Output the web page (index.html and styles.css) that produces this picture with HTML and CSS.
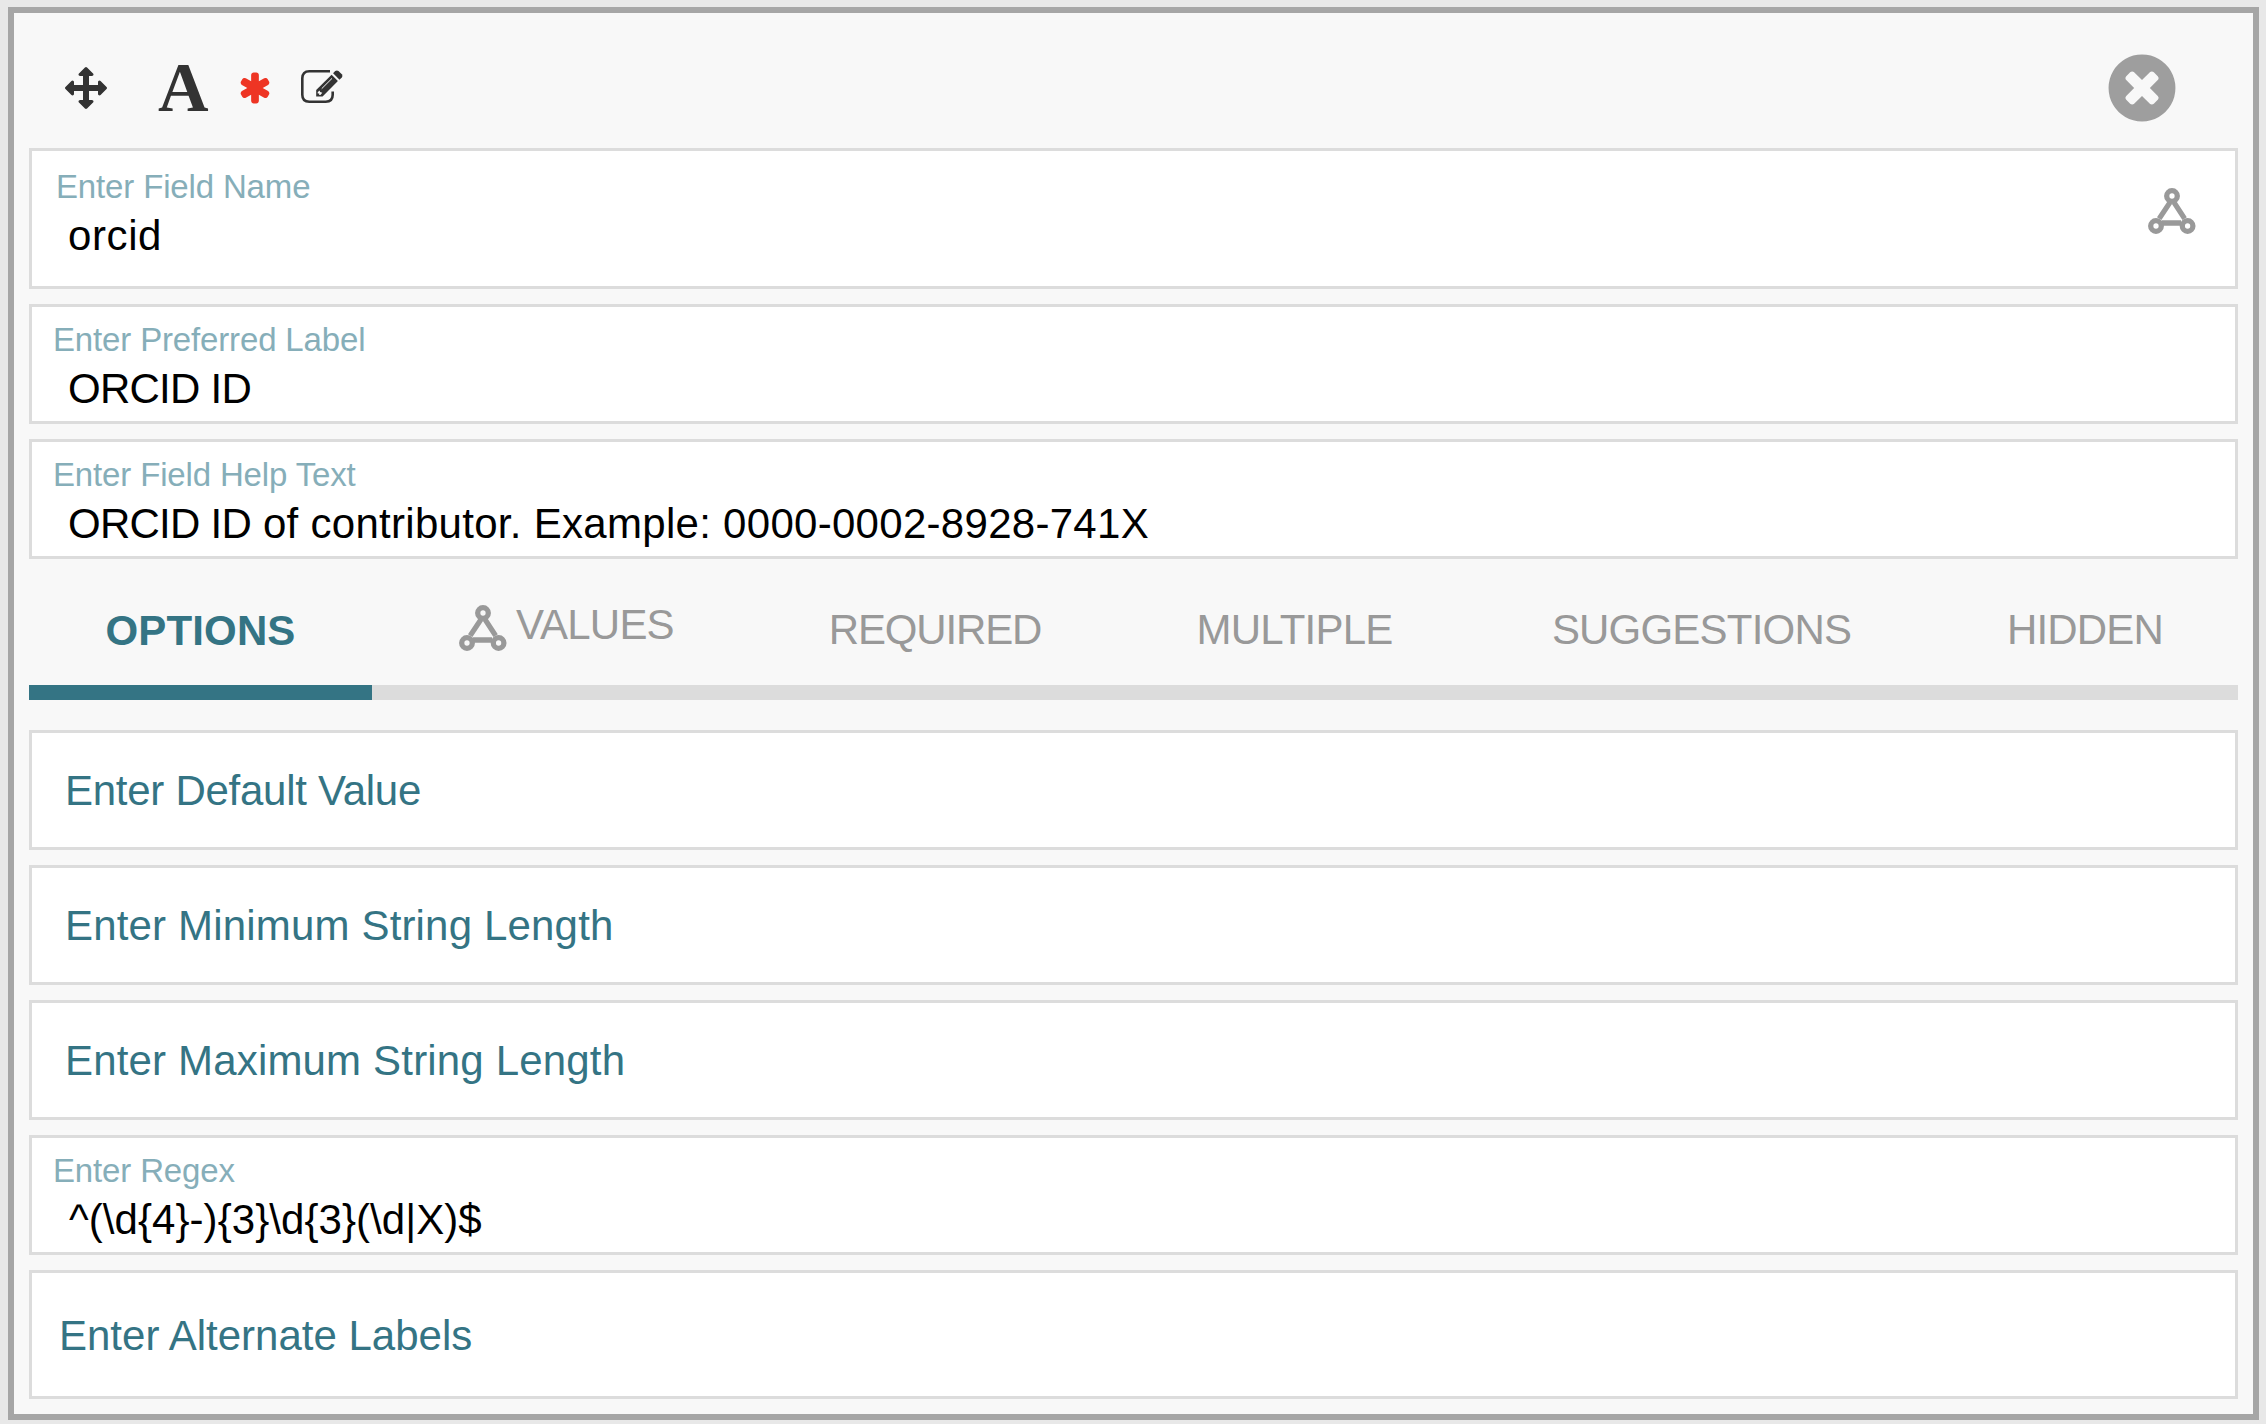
FILE: index.html
```html
<!DOCTYPE html>
<html lang="en">
<head>
<meta charset="utf-8">
<title>Field editor</title>
<link rel="stylesheet" href="styles.css">
</head>
<body>
<svg class="defs" width="0" height="0" aria-hidden="true">
  <symbol id="graph" viewBox="0 0 48 46">
    <g fill="none" stroke="currentColor" stroke-width="5.3">
      <path d="M22 14.4 11.2 30.6M26 14.4 36.6 30.6M14 35H33"/>
      <circle cx="24" cy="8" r="5.3"/><circle cx="8" cy="38" r="5.3"/><circle cx="39.6" cy="38" r="5.3"/>
    </g>
  </symbol>
</svg>
<main class="panel">
  <header class="toolbar">
    <svg class="move" viewBox="0 0 1792 1792"><path d="M1792 896q0 26-19 45l-256 256q-19 19-45 19t-45-19-19-45v-128h-384v384h128q26 0 45 19t19 45-19 45l-256 256q-19 19-45 19t-45-19l-256-256q-19-19-19-45t19-45 45-19h128v-384h-384v128q0 26-19 45t-45 19-45-19l-256-256q-19-19-19-45t19-45l256-256q19-19 45-19t45 19 19 45v128h384v-384h-128q-26 0-45-19t-19-45 19-45l256-256q19-19 45-19t45 19l256 256q19 19 19 45t-19 45-45 19h-128v384h384v-128q0-26 19-45t45-19 45 19l256 256q19 19 19 45z"/></svg>
    <span class="type">A</span>
    <svg class="star" viewBox="0 0 1792 1792"><path d="M1546 1050q46 26 59.500 77.500t-12.500 97.500l-64 110q-26 46-77.500 59.500t-97.500-12.500l-266-153v307q0 52-38 90t-90 38h-128q-52 0-90-38t-38-90v-307l-266 153q-46 26-97.500 12.500t-77.500-59.500l-64-110q-26-46-12.500-97.500t59.500-77.500l266-154-266-154q-46-26-59.500-77.500t12.500-97.500l64-110q26-46 77.500-59.500t97.500 12.500l266 153v-307q0-52 38-90t90-38h128q52 0 90 38t38 90v307l266-153q46-26 97.500-12.500t77.500 59.500l64 110q26 46 12.500 97.500t-59.500 77.500l-266 154z"/></svg>
    <svg class="edit" viewBox="0 0 42 33">
      <path class="frame" d="M29 1.300H8.300Q1.300 1.300 1.300 8.300V24.700Q1.300 31.700 8.300 31.700H24.700Q31.700 31.700 31.700 24.700V21.500"/>
      <path d="M30.600 4.800 36.900 11 21.600 26.500H15.200V19.900Z"/>
      <path d="M32.100 3.200 34.200 1.100Q35.900-.2 37.500 1.100L40.800 4.300Q42.200 6 40.800 7.500L38.500 9.700Z"/>
      <path class="cut" d="M16.700 22.200 18.500 20.400 19.200 22.100 21.300 22.700 19.400 24.900H18.200V23.600H16.700Z"/>
      <path class="shine" d="M20.700 18.700 31 8.400"/>
    </svg>
    <svg class="close" viewBox="0 0 1792 1792"><path d="M1277 1122q0-26-19-45l-181-181 181-181q19-19 19-45 0-27-19-46l-90-90q-19-19-46-19-26 0-45 19l-181 181-181-181q-19-19-45-19-27 0-46 19l-90 90q-19 19-19 46 0 26 19 45l181 181-181 181q-19 19-19 45 0 27 19 46l90 90q19 19 46 19 26 0 45-19l181-181 181 181q19 19 45 19 27 0 46-19l90-90q19-19 19-46zm387-226q0 209-103 385.500t-279.500 279.500-385.500 103-385.500-103-279.500-279.500-103-385.500 103-385.500 279.500-279.500 385.500-103 385.500 103 279.500 279.500 103 385.500z"/></svg>
  </header>

  <section class="fields">
    <div class="field name">
      <div><div class="label">Enter Field Name</div><div class="value">orcid</div></div>
      <svg class="graph"><use href="#graph"/></svg>
    </div>
    <div class="field"><div><div class="label">Enter Preferred Label</div><div class="value"><span class="caps">ORCID ID</span></div></div></div>
    <div class="field"><div><div class="label">Enter Field Help Text</div><div class="value help"><span class="caps">ORCID ID</span> of contributor. Example: 0000-0002-8928-741X</div></div></div>
  </section>

  <nav class="tabs">
    <div class="tab active"><span>OPTIONS</span></div>
    <div class="tab values"><svg class="graph"><use href="#graph"/></svg><span>VALUES</span></div>
    <div class="tab required"><span>REQUIRED</span></div>
    <div class="tab multiple"><span>MULTIPLE</span></div>
    <div class="tab suggestions"><span>SUGGESTIONS</span></div>
    <div class="tab hidden"><span>HIDDEN</span></div>
  </nav>

  <section class="fields">
    <div class="field"><div class="placeholder default">Enter Default Value</div></div>
    <div class="field"><div class="placeholder length">Enter Minimum String Length</div></div>
    <div class="field"><div class="placeholder length">Enter Maximum String Length</div></div>
    <div class="field"><div><div class="label">Enter Regex</div><div class="value regex">^(\d{4}-){3}\d{3}(\d|X)$</div></div></div>
    <div class="field alternate"><div class="placeholder">Enter Alternate Labels</div></div>
  </section>
</main>
</body>
</html>
```
FILE: styles.css
```css
* { box-sizing: border-box; }
body {
  margin: 0;
  width: 2266px;
  height: 1424px;
  padding: 7px 7px 4px 8px;
  background: #e8e8e8;
  font-family: "Liberation Sans", Arial, Helvetica, sans-serif;
  font-size: 42px;
  overflow: hidden;
}
.defs { display: none; }
svg { display: block; flex: none; overflow: visible; }
.panel {
  height: 1413px;
  border: 6px solid #a6a6a6;
  background: #f8f8f8;
  padding: 0 15px;
}
.toolbar {
  display: flex;
  align-items: center;
  height: 135px;
  padding: 15px 57px 0 36px;
  color: #333;
  fill: #333;
}
.move { width: 42px; height: 42px; }
.type {
  margin-left: 51px;
  width: 51px;
  font: bold 70px/80px "Liberation Serif", "Times New Roman", serif;
}
.star { width: 36px; height: 36px; margin-left: 28px; fill: #ee3524; }
.edit { width: 42px; height: 33px; margin-left: 28px; margin-top: -3px; }
.frame { fill: none; stroke: #333; stroke-width: 2.6; }
.cut { fill: #f8f8f8; }
.shine { fill: none; stroke: #f8f8f8; stroke-width: 1; }
.close { width: 78px; height: 78px; margin-left: auto; fill: #9e9e9e; }

.fields { display: flex; flex-direction: column; gap: 15px; }
.field {
  display: flex;
  justify-content: space-between;
  height: 120px;
  border: 3px solid #dcdcdc;
  background: #fff;
  padding: 15px 21px 0;
  white-space: pre;
}
.field.name { height: 141px; padding: 18px 39px 0 24px; }
.label { font-size: 33px; line-height: 36px; letter-spacing: -0.15px; color: #86aeb9; }
.value { margin: 7px 0 0 15px; line-height: 48px; color: #000; }
.name .value { margin-left: 12px; letter-spacing: 0.6px; }
.help { letter-spacing: 0.29px; }
.caps { letter-spacing: -0.75px; }
.value.regex { margin-left: 16px; letter-spacing: 0.06px; }
.graph { width: 48px; height: 46px; color: #999; }
.name .graph { margin-top: 19px; }
.placeholder { padding: 19px 0 0 12px; line-height: 48px; color: #347484; }
.default { letter-spacing: -0.27px; }
.length { letter-spacing: 0.17px; }
.alternate { height: 129px; }
.alternate .placeholder { padding: 24px 0 0 6px; }

.tabs {
  display: flex;
  height: 141px;
  margin-bottom: 30px;
  line-height: 48px;
  letter-spacing: -0.8px;
  color: #999;
}
.tab {
  display: flex;
  justify-content: center;
  padding-top: 47px;
  border-bottom: 15px solid #dcdcdc;
}
.active {
  width: 343px;
  padding-top: 48px;
  border-color: #347484;
  color: #347484;
  font-weight: bold;
  letter-spacing: 0.15px;
}
.values { width: 380px; justify-content: flex-start; padding: 42px 0 0 87px; }
.values .graph { margin: 4px 9px 0 0; }
.required { width: 366px; letter-spacing: -1.15px; }
.multiple { width: 353px; }
.suggestions { width: 461px; }
.hidden { flex: 1; }
```
